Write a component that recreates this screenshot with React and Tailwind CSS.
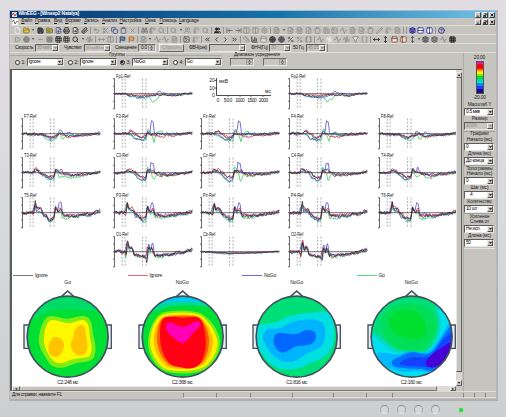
import React from 'react';
import {
  File, FolderOpen, Save, FolderInput, FileDown, Printer, FileSearch, Paperclip, Undo2, Scissors, Copy, Clipboard, X,
  Binoculars, Search, Replace, Users, ArrowLeftToLine, ArrowRightToLine, Columns2, Rows2, Settings, Activity, FileText, Layers,
  HelpCircle, Play, Circle, Square, Minus, Grid3x3, Flag, Filter, ChevronsLeft, ChevronLeft, ChevronRight, ChevronsRight,
  ChartColumn, Globe, Percent, Brackets, AudioWaveform, Ruler, PanelTop, PanelLeft, MoveHorizontal, MoveVertical, Image, Pencil,
} from 'lucide-react';

const G = '#8b8a86';
const K = '#222';
const N = '#1c1c8c';

const bar1 = [
  [File, '#eee'], [FolderOpen, '#8a6d10', '#e8c850'], '.', [Save, K, '#666'], [FolderInput, '#6a6420', '#b8a84c'], [FileDown, '#44508a'], [Printer, '#333', '#999'], [FileSearch, K, '#eee'], [Paperclip, K], '|',
  [Undo2, G], [Scissors, G], [Copy, '#3c4c86'], [Clipboard, '#5a5c86'], [X, G], '|', [Binoculars, '#777'], [Replace, '#777'], [Search, G], '|', [Search, G], '.',
  [Users, G], [Replace, G], [Search, G], '|', [Users, K, K], '|', [ArrowLeftToLine, '#666'], [ArrowRightToLine, '#666'], [Columns2, G], [Columns2, G], [Settings, G], '|',
  [FileText, G], '.', [FileSearch, G], [FileText, G], [FileDown, G], [Clipboard, G], [Save, G], [Image, G], [Activity, G], [FileText, G], [FileSearch, G], [Clipboard, G], [Pencil, G], [Replace, G], [FileText, G], '|', '|',
  [Layers, N, '#5a5ac0'], [Rows2, N, '#fff'], [Columns2, N, '#fff'], '|', [HelpCircle, N],
];
const bar2 = [
  [Play, G], [Circle, G, G], '.', [Minus, G], [Square, G, G], [Grid3x3, K, '#ddd'], [Grid3x3, '#333', '#ddd'], [Search, K], '.', [AudioWaveform, G], '|', [MoveHorizontal, G], [Columns2, G], '|',
  [Flag, '#28406a', '#5a86b0'], [Flag, '#b0622c', '#e0a060'], '|', [FileText, G], '.', [Activity, G], [Activity, G], [FileText, G], '|', [Image, '#555'], [Replace, G], '|',
  [ChevronsLeft, K], [ChevronLeft, K], [ChevronRight, K], [ChevronsRight, K], '|', [Ruler, G], [ChartColumn, K], [PanelTop, G, '#ddd'], [Globe, '#444', '#555'], [Globe, '#555', '#666'], [Percent, '#555'], [Percent, G], [Brackets, '#666'], '|',
  [Activity, G], [AudioWaveform, '#eee'], [Activity, G], [AudioWaveform, G], [Filter, '#777', '#eee'], [Brackets, G], '|',
  [MoveHorizontal, K], [MoveVertical, K], [PanelTop, '#7a3b2c', '#f4e8dc'], [PanelLeft, '#7a3b2c', '#f4e8dc'], [MoveVertical, '#444'], '.', [Layers, '#444', '#777'], [Layers, '#555', '#888'], [Activity, G], [Grid3x3, K, '#888'],
];

function Toolbar({ items }) {
  return (
    <div className="flex h-[9px] shrink-0 items-center border-t border-[#dddad5] pl-[3px]">
      {items.map((it, i) => {
        if (it === '|') return <div key={i} className="mx-px h-[7px] w-px shrink-0 border-l border-[#989690] bg-[#e4e2de]" />;
        if (it === '.') return <div key={i} className="w-[5px] shrink-0 text-center text-[4px] leading-none text-[#444]">▾</div>;
        const Icon = it[0];
        return (
          <div key={i} className="flex w-[8.9px] shrink-0 justify-center">
            <Icon size={7} color={it[1]} fill={it[2] || 'none'} strokeWidth={2.7} />
          </div>
        );
      })}
    </div>
  );
}

const Arrow = ({ off }) => (
  <div className="flex w-[6px] shrink-0 items-center justify-center border border-t-[#f2f0ec] border-r-[#55534f] border-b-[#55534f] border-l-[#f2f0ec] bg-[#c8c5bf]">
    <svg width="3" height="2" viewBox="0 0 4 2"><path d="M0 0h4L2 2z" fill={off ? '#777' : '#000'} /></svg>
  </div>
);

function Select({ w, v, off, h = 'h-[8px]' }) {
  return (
    <div className={`flex shrink-0 justify-between border border-t-[#5e5c58] border-l-[#5e5c58] border-r-[#e9e7e3] border-b-[#e9e7e3] ${h} ${w} ${off ? 'bg-[#c8c5bf] text-[#8f8d88]' : 'bg-white text-black'}`}>
      <span className="flex items-center pl-px text-[4.8px] leading-none tracking-[-0.3px] whitespace-nowrap">{v}</span>
      <Arrow off={off} />
    </div>
  );
}

function Spinner({ w, v }) {
  return (
    <div className={`flex h-[8px] shrink-0 justify-between border border-t-[#6e6c68] border-l-[#6e6c68] border-r-[#eceae6] border-b-[#eceae6] bg-[#c8c5bf] ${w}`}>
      <span className="flex items-center pl-[2px] leading-none">{v}</span>
      <svg className="shrink-0" width="7" height="6" viewBox="0 0 7 6">
        <path d="M0.5 0.5h6v5h-6zM0.5 3h6" fill="#cfccc6" stroke="#8a8884" strokeWidth=".6" />
        <path d="M2 2.4h3L3.5 1zM2 3.7h3L3.5 5z" fill="#444" />
      </svg>
    </div>
  );
}

const Radio = ({ on, n }) => (
  <>
    <div className={`flex h-[5px] w-[5px] shrink-0 items-center justify-center rounded-full border border-[#333] ${on ? 'bg-[#aaa]' : 'bg-white'}`}>
      {on && <div className="h-[2px] w-[2px] rounded-full bg-black" />}
    </div>
    <span className="w-[7px] shrink-0 pl-[2px]">{n}:</span>
  </>
);

const WinButtons = () => (
  <div className="ml-auto flex h-[6px] gap-px pr-[1px]">
    {['M1 4h2.5', 'M1 3h2v2H1zM2 1h2v2', 'M1 1l3 3M4 1L1 4'].map((d) => (
      <div key={d} className="h-[6px] w-[6px] border border-t-[#eee] border-r-[#444] border-b-[#444] border-l-[#eee] bg-[#c9c6c0]">
        <svg width="4" height="4" viewBox="0 0 5 5"><path d={d} fill="none" stroke="#000" strokeWidth="1" /></svg>
      </div>
    ))}
  </div>
);

/* Averaged potentials: control points (x, offset from the baseline) of each curve. */
const shapes = {
  fp: {
    r: [[0, 0], [11, 0], [16, 1], [28, 1.5], [34, 1], [42, 1], [50, 2], [60, 2], [70, 0], [78, -1]],
    b: [[0, 0], [11, 0], [16, 2.5], [28, 4], [34, 3], [40, 1], [45, -2], [50, 0], [60, 1], [70, 0], [78, -0.5]],
    g: [[0, 0], [11, 0], [16, 2.5], [28, 4.3], [34, 3.5], [38, 8], [41, 6], [46, 1.5], [60, 1.5], [78, 0]],
    k: [[0, 0], [11, 0], [14, 1.5], [28, 2.8], [34, 2], [46, 1], [60, 2], [70, 0], [78, -0.5]],
  },
  f: {
    r: [[0, 0], [12, 0], [16, -3], [20, 0], [27, 3.5], [30, 2.5], [33, -0.5], [38, 1], [46, 3.5], [55, 1.5], [66, 1], [78, -0.5]],
    b: [[0, 0], [12, 0], [16, 1], [22, 5], [28, 6], [31, 5], [33, -2], [35, -1], [37, -12], [38.5, -11], [40, 0], [48, 0], [60, 1], [78, -1]],
    g: [[0, 0], [12, -1], [16, 1.5], [22, 5], [27, 7], [31, 7], [34, -5], [36, 0], [38, 4], [39.5, 8], [41, 2], [44, -2], [52, 1], [66, 0.5], [78, -0.5]],
    k: [[0, 0], [12, 0], [16, -2], [20, 1], [27, 4], [30, 3], [33, 0], [38, 1], [44, 0], [55, 1], [66, 0], [78, -1]],
  },
  fl: {
    r: [[0, 0], [18, 0.5], [28, 3.5], [33, 2], [38, 0.5], [46, 3], [56, 2], [78, 0]],
    b: [[0, 0], [18, 1], [28, 5], [32, 4], [38, -3], [41, 1], [46, -1], [52, 1.5], [66, 1], [78, -1]],
    g: [[0, 0], [18, 1.5], [28, 7], [32, 6], [37, 0], [40, 5], [44, 2], [56, 2], [78, 0]],
    k: [[0, 0], [18, 0.5], [28, 4], [33, 2], [38, 0], [46, 2.5], [56, 1.5], [78, -0.5]],
  },
  c: {
    r: [[0, 0], [10, 0], [12, -4], [16, -3], [20, -1], [26, 4], [31, 4.5], [33, -1], [38, -1], [46, 3], [56, 2], [66, 1], [78, -1]],
    b: [[0, 0], [10, 0], [13, -2], [18, 0], [24, 6], [28, 8], [31, 7], [33, -2], [35, 0], [36.5, -10], [38.5, -10], [40, 0], [46, 1], [60, 1], [78, -1]],
    g: [[0, 0], [10, 0], [13, -2], [18, 0], [24, 6], [28, 8.5], [31, 7], [33, -5], [36, -2], [39, 7], [42, 1], [50, 4], [60, 2], [78, 0]],
    k: [[0, 0], [10, 0], [12, -3], [16, -2], [20, 0], [26, 4], [31, 5], [33, -2], [38, -3], [42, 0], [50, 2], [66, 1], [78, -1]],
  },
  t: {
    r: [[0, 0], [10, 0], [13, -4], [16, -2], [20, 1], [27, 4.5], [31, 4], [33, -2], [37, -1], [42, 1], [54, 3], [66, 1], [78, 0]],
    b: [[0, 0], [10, 0], [14, -2], [20, 2], [26, 6], [31, 6], [33, -3], [36, -1], [38, -4.5], [42, 1], [50, 2], [66, 1], [78, -1]],
    g: [[0, 0], [10, 0], [14, -1.5], [20, 2], [26, 7], [31, 7], [33, -2], [37, 4], [42, 3.5], [50, 5], [60, 3], [78, 0]],
    k: [[0, 0], [10, 0], [13, -3], [20, 1], [27, 4], [31, 4], [33, -3], [38, 0], [50, 2], [66, 1], [78, -1]],
  },
  p: {
    r: [[0, 0], [9, 0], [11, 2], [12.5, -10], [14.5, -5], [18, -4], [21, 1], [27, 5], [31, 5], [33, -4], [36, -1], [38, -4], [41, 3], [50, 2.5], [66, 1], [78, -1]],
    b: [[0, 0], [9, 0], [12.5, -7], [14, -3], [18, -1], [22, 4], [28, 7.5], [31, 6], [33, -5], [35, -1], [37, -10], [38.5, -9], [40, 1], [50, 3], [66, 2], [78, -1]],
    g: [[0, 0], [9, 0], [12.5, -7], [14, -2], [18, -1], [22, 4], [28, 8.5], [31, 8], [33, -4], [36, 0], [38, 0], [41, 6], [50, 4.5], [66, 2], [78, 0]],
    k: [[0, 0], [9, 0], [11.5, 0], [12.5, -11], [14, -4], [18, -4], [21, 1], [27, 6], [31, 6], [33, -5], [36, -1], [38, -2], [41, 3], [54, 3.5], [66, 1], [78, -2]],
  },
  o: {
    r: [[0, 0], [10, 0], [11.5, 4], [12.7, -12], [15, -3], [17, -5], [20, 3], [27, 4.5], [31, 5], [33, -3], [35, -2], [37, -3], [40, 4], [54, 3], [66, 1], [78, -2]],
    b: [[0, 0], [10, 0], [12.7, -8], [15, -2], [17, -4], [20, 3.5], [30, 5], [32.5, 9], [34, -8], [36, 0], [38, -9], [40, 3], [50, 4.5], [62, 2], [78, -2]],
    g: [[0, 0], [10, 0], [11.5, 5], [12.7, -7], [15, -2], [17, -3], [20, 4], [30, 6], [32.5, 7], [34, -4], [36, 1], [39, 0], [42, 6.5], [52, 3], [66, 1], [78, -1]],
    k: [[0, 0], [10, 0], [11.8, 1], [12.7, -11], [15, -2], [17, -5], [20, 3], [30, 5], [32.5, 10], [34, -5], [36, 0], [37.5, -3], [40, 4], [54, 3], [66, 1], [78, -2]],
  },
  flat: {
    r: [[0, 0], [28, 1], [50, 0.7], [78, 0]],
    b: [[0, 0], [28, 1.5], [50, 1.5], [78, -0.3]],
    g: [[0, 0], [28, 2.5], [36, 1.5], [60, 1], [78, 0]],
    k: [[0, 0], [20, 1], [32, 1.8], [50, 1], [78, -0.3]],
  },
};

function curve(points, seed, amp) {
  let s = seed * 7919 + 13;
  let d = '';
  let k = 0;
  let n = 0;
  for (let x = 0; x <= 78; x += 0.7) {
    while (k < points.length - 2 && x > points[k + 1][0]) k++;
    const [x0, y0] = points[k];
    const [x1, y1] = points[k + 1];
    const t = (1 - Math.cos(Math.PI * Math.min(1, (x - x0) / (x1 - x0)))) / 2;
    s = (s * 16807) % 2147483647;
    n = n * 0.4 + (s / 2147483647 - 0.5);
    const y = y0 + (y1 - y0) * t + n * amp;
    d += `${x ? 'L' : 'M'}${(x + 1.6).toFixed(1)} ${(19.7 + y).toFixed(2)}`;
  }
  return d;
}

const inks = [['g', '#27c455'], ['b', '#4640d0'], ['r', '#c01c34'], ['k', '#15252b']];

function Plot({ name, kind, seed }) {
  const amp = kind === 'flat' ? 0.8 : kind === 'p' || kind === 'o' ? 2.9 : kind === 'fp' ? 1.6 : 2.3;
  return (
    <svg width="82" height="39.5" viewBox="0 0 82 39.5" className="overflow-visible">
      {[9.2, 12.1, 29.6, 33].map((x) => <path key={x} d={`M${x} 4.5V35`} stroke="#8c8c8c" strokeWidth=".7" strokeDasharray="2 1.4" />)}
      <path d="M1.5 4.5V35M0 4.7h1.5M0 12.2h1.5M0 19.7h1.5M0 27.2h1.5M0 34.8h1.5" stroke="#444" strokeWidth=".8" />
      <path d="M1.5 19.7H79" stroke="#333" strokeWidth=".7" />
      {inks.map(([c, color], i) => (
        <path key={c} d={curve(shapes[kind][c], seed * 5 + i + 1, amp)} fill="none" stroke={color} strokeWidth={c === 'k' ? 0.65 : 0.75} />
      ))}
      <text x="3" y="3.9" fontSize="5.2" fill="#111" textLength={name.length * 2.05} lengthAdjust="spacingAndGlyphs">{name}</text>
    </svg>
  );
}

function Scale() {
  return (
    <svg width="82" height="39.5" viewBox="0 0 82 39.5" className="overflow-visible" fontSize="5" fill="#222">
      <path d="M16.5 4V21.5H71M14.8 6.5h1.7M14.8 14h1.7M28 21.5v1.3M40 21.5v1.3M51 21.5v1.3M63 21.5v1.3" fill="none" stroke="#222" strokeWidth=".8" />
      <g textAnchor="end"><text x="14.8" y="8.4">20</text><text x="14.8" y="16">10</text><text x="14.8" y="23.2">0</text></g>
      <text x="19" y="8.6">мкВ</text>
      <text x="65" y="19">мс</text>
      <g textAnchor="middle">
        <text x="18" y="27.6">0</text><text x="28" y="27.6">500</text><text x="40" y="27.6" textLength="9.6">1000</text>
        <text x="52" y="27.6" textLength="9.6">1500</text><text x="63.5" y="27.6" textLength="9.6">2000</text>
      </g>
    </svg>
  );
}

const cells = [
  null, ['Fp1-Ref', 'fp'], 'scale', ['Fp2-Ref', 'fp'], null,
  ['F7-Ref', 'fl'], ['F3-Ref', 'f'], ['Fz-Ref', 'f'], ['F4-Ref', 'f'], ['F8-Ref', 'fl'],
  ['T3-Ref', 't'], ['C3-Ref', 'c'], ['Cz-Ref', 'c'], ['C4-Ref', 'c'], ['T4-Ref', 't'],
  ['T5-Ref', 'p'], ['P3-Ref', 'p'], ['Pz-Ref', 'p'], ['P4-Ref', 'p'], ['T6-Ref', 'p'],
  null, ['O1-Ref', 'o'], ['Cb-Ref', 'flat'], ['O2-Ref', 'o'], null,
];

/* Scalp maps, outermost level first. */
const maps = [
  {
    title: 'Go', cap: 'C2:248 мс', base: '#00df35',
    areas: [
      ['#00dc68', 'M-130 -130H130V-75C80 -72 50 -82 0 -82S-70 -75 -105 -50L-130 -50Z'],
      ['#80ec10', 'M-60 -60C-40 -66 -22 -55 -2 -53C20 -55 42 -68 60 -58C76 -45 73 -22 78 0C84 24 88 48 76 66C56 80 35 74 12 84C-12 96 -42 98 -55 80C-68 58 -82 42 -86 18C-88 -12 -76 -48 -60 -60Z'],
      ['#fff800', 'M-54 -48C-36 -54 -18 -42 0 -40C20 -40 38 -55 53 -48C68 -36 64 -12 68 8C74 32 74 52 62 60C40 66 18 64 0 73C-22 84 -40 80 -50 65C-62 45 -72 30 -71 8C-70 -15 -66 -38 -54 -48Z'],
      ['#ffc400', 'M-35 1C-20 2 -10 14 -11 27C-13 42 -22 60 -36 61C-52 62 -60 46 -57 28C-54 12 -46 1 -35 1ZM42 -35C54 -34 52 -18 56 0C60 20 62 38 52 52C42 60 28 58 19 48C9 36 6 24 12 14C20 2 16 -10 22 -20C28 -29 34 -35 42 -35Z'],
    ],
  },
  {
    title: 'NoGo', cap: 'C2:368 мс', base: '#00df35',
    areas: [
      ['#00da98', 'M-130 -130H130V-72C80 -92 50 -94 0 -94S-70 -82 -130 -60Z'],
      ['#00c8f0', 'M-130 -130H130V-85C70 -104 40 -105 0 -105S-70 -100 -130 -88Z'],
      ['#80ec10', 'M-62 -72C-30 -80 20 -82 55 -70C85 -52 106 -22 112 12C114 42 98 70 76 94C45 114 -18 114 -52 104C-84 90 -104 52 -104 18C-104 -20 -86 -58 -62 -72Z'],
      ['#fff000', 'M-60 -66C-30 -74 20 -75 52 -65C78 -48 98 -18 104 12C106 38 94 64 72 86C45 106 -15 107 -50 98C-78 82 -96 48 -98 18C-98 -18 -82 -55 -60 -66Z'],
      ['#ffb800', 'M-58 -60C-30 -67 20 -70 50 -60C70 -46 86 -16 91 8C92 32 84 58 66 80C42 100 -16 102 -46 90C-70 74 -84 44 -87 14C-87 -18 -76 -48 -58 -60Z'],
      ['#ff5a00', 'M-58 -57C-30 -63 20 -66 50 -57C68 -42 76 -16 79 6C80 32 74 58 60 77C40 94 -14 96 -40 85C-62 68 -74 42 -77 12C-78 -18 -72 -46 -58 -57Z'],
      ['#ff0014', 'M-56 -56C-36 -64 -12 -56 2 -56C20 -58 40 -64 52 -54C64 -40 67 -16 69 6C71 32 66 60 52 82C36 98 14 98 -10 91C-34 90 -46 74 -56 56C-66 34 -68 14 -68 -6C-68 -28 -66 -46 -56 -56Z'],
      ['#ff00b4', 'M-43 -44C-26 -42 -16 -28 4 -30C20 -32 34 -48 50 -46C58 -36 46 -20 34 -14C22 -2 14 18 0 20C-14 18 -24 4 -36 -4C-48 -14 -56 -34 -43 -44Z'],
    ],
  },
  {
    title: 'NoGo', cap: 'C1:816 мс', base: '#00de78',
    areas: [
      ['#00e0e0', 'M-130 -32C-92 -44 -70 -34 -48 -50C-20 -66 34 -72 90 -76C108 -60 118 -30 112 0C112 38 90 62 62 72C36 78 18 96 -8 98C-40 102 -72 92 -90 70C-104 52 -112 36 -130 30Z'],
      ['#00b4ff', 'M-70 -24C-50 -22 -40 -30 -14 -44C20 -54 60 -58 80 -40C90 -20 86 10 76 28C60 42 38 44 20 58C0 74 -28 84 -52 70C-76 56 -92 32 -101 8C-104 -14 -88 -26 -70 -24Z'],
      ['#0068ff', 'M-56 -10C-36 -14 -12 -2 8 -10C22 -22 46 -24 56 -12C62 4 54 20 38 24C20 28 4 26 -10 32C-22 42 -38 52 -50 46C-60 38 -70 26 -69 10C-68 0 -66 -8 -56 -10Z'],
    ],
  },
  {
    title: 'NoGo', cap: 'C2:160 мс', base: '#00de78',
    areas: [
      ['#00df55', 'M-88 -62C-64 -96 -16 -106 20 -96C56 -88 74 -62 74 -30C68 4 52 24 32 36C12 50 -22 44 -44 32C-76 18 -98 -26 -88 -62Z'],
      ['#00df30', 'M-66 -50C-54 -82 -14 -90 14 -74C38 -58 50 -30 42 -6C30 10 8 10 -14 4C-42 -2 -74 -20 -66 -50Z'],
      ['#00dcc0', 'M62 -130C70 -84 84 -54 80 -26C76 8 56 34 38 46C10 58 -18 40 -40 40C-62 32 -90 0 -130 -22V130H130V-130Z'],
      ['#00e0ee', 'M70 -130C76 -80 92 -56 88 -26C82 12 64 36 40 50C14 64 -18 42 -42 50C-68 44 -94 10 -130 -10V130H130V-130Z'],
      ['#00b8ff', 'M130 -66C102 -30 84 10 60 38C30 62 10 32 -22 48C-52 60 -78 44 -102 48C-110 62 -86 82 -74 92C-50 100 -34 108 -6 106C20 96 50 116 80 96L130 30Z'],
      ['#0070ff', 'M130 -50C104 -22 88 14 64 42C40 64 22 44 0 46C-24 50 -38 64 -52 66C-64 76 -62 88 -46 92C-22 94 0 100 30 96C56 108 70 104 94 84L130 30Z'],
      ['#1440ff', 'M130 -24C104 0 86 16 68 46C46 70 30 60 8 62C-12 64 -34 72 -36 82C-18 92 20 86 48 92C74 98 84 84 100 66Z'],
      ['#4800d8', 'M130 10C104 20 96 32 84 38C68 44 52 60 44 74C38 88 50 94 66 92C88 88 98 70 130 50Z'],
    ],
  },
];

function Head({ m, id }) {
  return (
    <div className="flex w-[114.5px] shrink-0 flex-col items-center">
      <div className="h-[9.5px] text-[5px] leading-[5px]">{m.title}</div>
      <svg width="89.3" height="89.3" viewBox="-134 -143 268 268">
        <clipPath id={id}><circle r="121" /></clipPath>
        <path d="M-18 -121L0 -137L18 -121" fill="#fff" stroke="#40505c" strokeWidth="5" />
        <path d="M-131 -35h14V35h-14ZM117 -35h14V35h-14Z" fill="#e8eef2" stroke="#40505c" strokeWidth="4" />
        <g clipPath={`url(#${id})`}>
          <circle r="122" fill={m.base} />
          {m.areas.map(([c, d], i) => <path key={i} d={d} fill={c} />)}
        </g>
        <circle r="121.5" fill="none" stroke="#40505c" strokeWidth="5" />
      </svg>
      <div className="mt-[1px] text-[5px] leading-[6px] tracking-[-0.3px]">{m.cap}</div>
    </div>
  );
}

const legend = [['Ignore', 'bg-[#777]'], ['Ignore', 'bg-[#f06070]'], ['NoGo', 'bg-[#7468e8]'], ['Go', 'bg-[#50dc74]']];

const Label = ({ children, c = 'h-[6px]' }) => <div className={`flex items-center justify-center leading-none whitespace-nowrap ${c}`}>{children}</div>;

const menu = [
  ['Файл', 'w-[14px]'], ['Правка', 'w-[19px]'], ['Вид', 'w-[11px]'], ['Формат', 'w-[19px]'], ['Запись', 'w-[18px]'], ['Анализ', 'w-[17.5px]'],
  ['Настройка', 'w-[25.5px]'], ['Окна', 'w-[14.5px]'], ['Помощь', 'w-[19.5px]'], ['Language', 'w-[22px]'],
];

export default function App() {
  return (
    <div className="h-[417px] w-[506px] overflow-hidden bg-linear-to-b from-[#e2dde2] via-[#d9dadd] to-[#cdced0] pt-[10px] pl-[9px] font-['Liberation_Sans',Arial,sans-serif] text-[5px] leading-none text-[#1a1a1a]">
      <div className="flex h-[391px] w-[489px] flex-col border-r-2 border-b-2 border-l border-r-[#b4b5b8] border-b-[#aeafb1] border-l-[#b9babd] bg-[#c6c4bf]">
        <div className="flex h-[8px] shrink-0 items-center border-t border-[#9cbfd4] bg-linear-to-r from-[#0d3470] via-[#1673a8] via-55% to-[#72c2e6] pl-[2px] text-white">
          <svg width="5" height="5" viewBox="0 0 5 5"><path d="M0 0h5v5H0z" fill="#ddd" /><path d="M0 3l1.5-2L3 4l2-3" fill="none" stroke="#b22" strokeWidth=".8" /></svg>
          <span className="pl-[1.5px] text-[4.9px] font-bold tracking-[-0.2px] whitespace-nowrap">WinEEG - [Winexp2 Natalya]</span>
          <WinButtons />
        </div>
        <div className="flex h-[7px] shrink-0 items-center pl-[2px] text-[4.8px] tracking-[-0.2px]">
          <svg className="mr-[3px]" width="6" height="6" viewBox="0 0 6 6"><path d="M0 0h6v6H0z" fill="#fff" /><path d="M0 3l1.5-2L3 5l2-3 1 1" fill="none" stroke="#333" strokeWidth=".7" /></svg>
          {menu.map(([t, w]) => <span key={t} className={`shrink-0 whitespace-nowrap ${w}`}><span className="underline decoration-[0.5px] underline-offset-[0.5px]">{t[0]}</span>{t.slice(1)}</span>)}
          <WinButtons />
        </div>
        <Toolbar items={bar1} />
        <Toolbar items={bar2} />
        <div className="flex h-[9px] shrink-0 items-center border-t border-[#dddad5] pl-[5px] text-[4.8px] tracking-[-0.3px] whitespace-nowrap">
          <span className="w-[20px] shrink-0">Скорость</span>
          <Select w="w-[24px]" v="30 мм/с" off />
          <span className="ml-[5px] w-[20px] shrink-0">Чувствит</span>
          <Select w="w-[27px]" v={<span className="text-[4.4px]">50 мкВ/см</span>} off />
          <span className="ml-[4px] w-[23px] shrink-0">Смещение</span>
          <Spinner w="w-[18px]" v="0.0" />
          <div className="ml-[3px] flex h-[8px] w-[25px] shrink-0 items-center justify-center border border-t-[#eee] border-r-[#66645f] border-b-[#66645f] border-l-[#eee] text-[#98968f]">Сбросить</div>
          <span className="ml-[5px] w-[20px] shrink-0">ФВЧ(сек)</span>
          <Select w="w-[37px]" v="" off />
          <span className="ml-[5px] w-[18px] shrink-0">ФНЧ(Гц)</span>
          <Select w="w-[22px]" v="30" off />
          <span className="ml-[2px] w-[13px] shrink-0">50 Гц</span>
          <Select w="w-[20px]" v="45-55" off />
          <div className="ml-px h-[8px] w-px bg-[#8a8884]" />
        </div>
        <div className="flex min-h-0 flex-1 border-t border-[#dedcd7]">
          <div className="flex w-[452px] shrink-0 flex-col">
            <div className="h-[16px] shrink-0">
              <div className="flex h-[4px] items-center text-[4.8px]">
                <div className="h-px w-[98px] bg-[#aaa8a3]" /><span className="w-[18px] text-center">Группы</span><div className="h-px w-[95px] bg-[#aaa8a3]" />
                <span className="ml-[13px] w-[46px] tracking-[-0.15px] whitespace-nowrap">Диапазон усреднения</span>
              </div>
              <div className="flex h-[10px] items-center pl-[4.5px]">
                <Radio n="1" /><Select w="w-[37px]" v="Ignore" /><div className="w-[4px]" />
                <Radio n="2" /><Select w="w-[37px]" v="Ignore" /><div className="w-[3px]" />
                <Radio n="3" on /><Select w="w-[37px]" v="NoGo" /><div className="w-[4px]" />
                <Radio n="4" /><Select w="w-[37px]" v="Go" /><div className="w-[8px]" />
                <Spinner w="w-[24px]" /><div className="w-[9px]" /><Spinner w="w-[24px]" />
              </div>
            </div>
            <div className="flex h-[317px] border-t border-l-2 border-[#5c5b5c]">
              <div className="w-[444px] shrink-0 overflow-hidden bg-white">
                <div className="grid grid-cols-[92px_86.5px_88.5px_89.5px_80px] grid-rows-[39.5px_39.5px_39.5px_39.5px_39.5px] pt-[4px] pl-[9px]">
                  {cells.map((c, i) => (
                    <div key={i} className="overflow-visible">
                      {c === 'scale' ? <Scale /> : c ? <Plot name={c[0]} kind={c[1]} seed={i} /> : null}
                    </div>
                  ))}
                </div>
                <div className="flex h-[8px] items-center pl-[1px]">
                  {legend.map(([t, c], i) => (
                    <div key={i} className="flex w-[114.5px] shrink-0 items-center gap-[2px]"><div className={`h-px w-[20px] ${c}`} /><span className="tracking-[-0.3px]">{t}</span></div>
                  ))}
                </div>
                <div className="-ml-[1.6px] flex">
                  {maps.map((m, i) => <Head key={i} m={m} id={`scalp${i}`} />)}
                </div>
              </div>
              <div className="flex w-[6px] shrink-0 flex-col bg-[#d9d7d3]">
                <div className="mt-[2px] h-[6px] border border-[#66645f] border-t-[#eee] border-l-[#eee] bg-[#c8c5bf] text-center text-[4px] leading-[4px]">▴</div>
                <div className="h-[294px] border-r border-b border-l border-r-[#66645f] border-b-[#55534f] border-l-[#eceae6] bg-[#c6c4bf]" />
                <div className="mt-auto h-[6px] border border-[#66645f] border-t-[#eee] border-l-[#eee] bg-[#c8c5bf] text-center text-[4px] leading-[4px]">▾</div>
              </div>
            </div>
            <div className="flex h-[5px] shrink-0 border-l-2 border-[#5c5b5c] bg-[#dddbd7]">
              <div className="flex h-[5px] w-[8px] items-center justify-center border border-[#66645f] border-t-[#eee] border-l-[#eee] bg-[#c8c5bf] text-[4px]">◂</div>
              <div className="h-[5px] w-[417px] border-t border-r border-b border-[#77756f] border-t-[#eceae6] bg-[#c6c4bf]" />
              <div className="ml-auto flex h-[5px] w-[6px] items-center justify-center border border-[#66645f] border-t-[#eee] border-l-[#eee] bg-[#c8c5bf] text-[4px]">▸</div>
              <div className="w-[6px] bg-[#c8c5bf]" />
            </div>
          </div>
          <div className="ml-[1px] w-[32px] border-l border-[#aeaca7] text-[4.8px] tracking-[-0.15px]">
            <Label c="mt-[2px] h-[6px]">20.00</Label>
            <div className="mx-auto h-[33px] w-[8px] border border-[#555] bg-[linear-gradient(to_bottom,#e818a8_0_8%,#ff0018_8%_22%,#ff7800_22%_29%,#fff000_29%_38%,#80ec10_38%_45%,#00df35_45%_55%,#00de78_55%_61%,#00e0e0_61%_68%,#0090ff_68%_78%,#2038ff_78%_88%,#200878_88%)]" />
            <Label c="h-[8px]">-20.00</Label>
            <Label c="h-[6px]">Масштаб Y</Label>
            <Select w="w-[30px]" v="0.5 мкв" />
            <Label c="h-[6px]">Размер</Label>
            <Select w="w-[30px]" v="100%" off />
            <div className="mt-px border-t border-[#a3a19c]" />
            <Label c="h-[5px]">Графики</Label>
            <Label c="h-[6px]">Начало (мс)</Label>
            <Select w="w-[30px]" v="0" />
            <Label c="h-[6px]">Длина (мс)</Label>
            <Select w="w-[30px]" v="До конца" />
            <div className="border-t border-[#a3a19c]" />
            <Label c="h-[6px]">Топограммы</Label>
            <Label c="h-[5px]">Начало (мс)</Label>
            <Select w="w-[30px]" v="0" />
            <Label c="h-[6px]">Шаг (мс)</Label>
            <Select w="w-[30px]" v={<span className="pl-[4px]">4</span>} />
            <Label c="h-[6px]">Количество</Label>
            <Select w="w-[30px]" v="10 шт" />
            <div className="border-t border-[#a3a19c]" />
            <Label c="h-[6px]">Усиление</Label>
            <Label c="h-[5px]">Слева от</Label>
            <Select w="w-[30px]" v="Не исп." />
            <Label c="h-[6px]">Длина (мс)</Label>
            <Select w="w-[30px]" v="50" />
            <div className="mt-[1px] border-t border-[#e4e2dd]" />
          </div>
        </div>
        <div className="flex h-[8px] shrink-0 items-center border-t border-[#dedcd7] pl-[2px]">
          <span className="w-[171px] shrink-0 text-[4.8px] tracking-[-0.3px]">Для справки, нажмите F1</span>
          {['w-[33px]', 'w-[34px]', 'w-[42px]', 'w-[41px]', 'w-[33px]', 'w-[26px]', 'w-[71px]', 'w-[11px]', 'w-[11px]', 'w-[11px]'].map((w, i) => (
            <div key={i} className={`h-[5px] shrink-0 border-b border-l border-b-[#dddbd6] border-l-[#8a8884] ${w}`} />
          ))}
        </div>
      </div>
      <div className="flex items-center gap-[8px] pt-[4px] pl-[371px]">
        {[0, 1, 2, 3].map((i) => <div key={i} className="h-[9px] w-[9px] rounded-full border border-t-[#8c8d90] border-r-[#a3a4a7] border-b-[#e3e3e5] border-l-[#a3a4a7] bg-[#d6d7d9]" />)}
        <div className="ml-[11px] h-[4px] w-[4px] rounded-full bg-[#20e030] shadow-[0_0_2px_#70e878]" />
      </div>
    </div>
  );
}
